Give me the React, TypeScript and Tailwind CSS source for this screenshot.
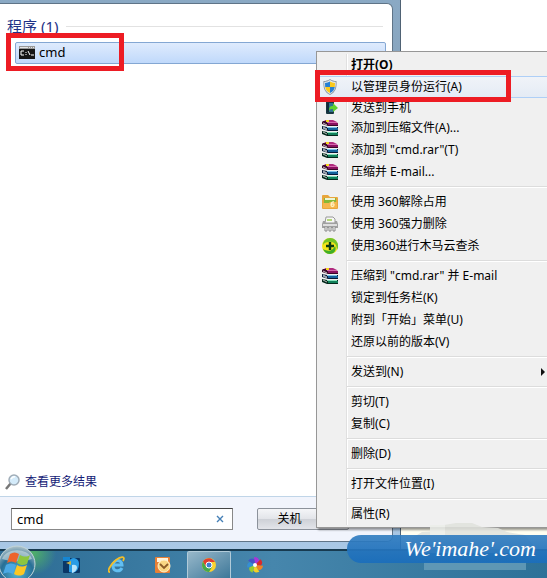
import type { ReactNode } from "react";

function WinRar() {
  return (
    <svg width="16" height="16" viewBox="0 0 16 16">
      <path d="M1 1h9l6 2v3H6L0 4V2z" fill="#3a0828" />
      <path d="M2 0h9l4 2H5z" fill="#b02a7e" />
      <path d="M5 2h10v1H5z" fill="#d768ae" />
      <path d="M6 3h10v2H6z" fill="#8a1260" />
      <path d="M0 6l5 1h11v4H6L0 9z" fill="#071a38" />
      <path d="M5 7h10v1H5z" fill="#7cc4ea" />
      <path d="M6 8h10v2H6z" fill="#14609a" />
      <path d="M0 11l5 1h11v4H5l-5-2z" fill="#04281c" />
      <path d="M5 12h10v1H5z" fill="#86e0bb" />
      <path d="M6 13h10v2H6z" fill="#11805a" />
      <path d="M1 3l4 2M1 7l4 2M1 8l4 2M1 12l4 2" fill="none" stroke="#e8e8e8" strokeWidth=".8" />
      <path d="M4 0h3v2H4z" fill="#f4d81f" />
    </svg>
  );
}

function Shield() {
  return (
    <svg width="16" height="16" viewBox="0 0 16 16">
      <path d="M8 0c2 1.500 4 2 6.500 2C15 8 14 13 8 16 2 13 1 8 1.500 2 4 2 6 1.500 8 0z" fill="#8b959e" />
      <path d="M8 1c2 1.300 3.500 1.800 5.700 2C14 8 13 12.500 8 15 3 12.500 2 8 2.300 3 4.500 2.800 6 2.300 8 1z" fill="#e4eaed" />
      <path d="M8 2.500V8H3.200L3 4c2-.2 3.500-.6 5-1.500zM8 8h4.800c-.5 3-2 4.800-4.800 6z" fill="#2780d4" />
      <path d="M8 2.500V8h4.800l.2-4c-2-.2-3.500-.6-5-1.500zM8 8H3.200c.5 3 2 4.800 4.800 6z" fill="#fbc91b" />
    </svg>
  );
}

function Phone() {
  return (
    <svg width="16" height="16" viewBox="0 0 16 16">
      <rect x="4" y="1" width="8" height="13" rx="1" fill="#183640" />
      <path d="M5 3h6v9H5z" fill="#2f7390" />
      <path d="M5 3h2v9H5z" fill="#102c3b" />
      <path d="M7 11c0-4 1-5 4-5V3l5 5-5 4V9c-2 0-3 0-4 2z" fill="#5fcf2e" />
    </svg>
  );
}

function Folder() {
  return (
    <svg width="16" height="16" viewBox="0 0 16 16">
      <path d="M0 2q0-1 1-1h5l2 2h7q1 0 1 1v10q0 1-1 1H1q-1 0-1-1z" fill="#e8a63c" />
      <path d="M2 4h12v5H2z" fill="#86b936" />
      <path d="M3 4h10v2H3z" fill="#ecf6d6" />
      <path d="M1 9h6l1-1h7v6H1z" fill="#f5b64e" />
      <path d="M12 8c-2-.5-3 1-3 3s3 2 3 0-2-1-3 0" fill="none" stroke="#fff2c4" strokeWidth="1.300" />
    </svg>
  );
}

function Shredder() {
  return (
    <svg width="16" height="16" viewBox="0 0 16 16">
      <path d="M4 1h7l2 2v4H3z" fill="#f7f7f7" stroke="#999" />
      <path d="M5 3h5v2H5z" fill="#b5d67b" />
      <path d="M1 5h2v2h10V5h2l1 3v4H0V8z" fill="#a0a0a0" />
      <path d="M1 8h14v2H1z" fill="#dedede" />
      <path d="M3 11v4h2v-4m2 0v4h2v-4m2 0v4h2v-4" fill="#fff" stroke="#888" />
    </svg>
  );
}

function Safe360() {
  return (
    <svg width="16" height="16" viewBox="0 0 16 16">
      <circle cx="8" cy="8" r="8" fill="#f3e51b" />
      <path d="M8 0a8 8 0 0 1 7 12c0-5-3-9-8-8-3 0-5 1-6 3 0-4 3-7 7-7z" fill="#4bb82c" opacity=".75" />
      <path d="M1 11c5 3 10 2 12-3 2 4-1 8-5 8-3 0-6-2-7-5z" fill="#3fae28" />
      <path d="M8 4v8M4 8h8" stroke="#0c3d14" strokeWidth="2.400" />
    </svg>
  );
}

function Terminal() {
  return (
    <svg width="16" height="13" viewBox="0 0 16 13">
      <path d="M0 0h16v13H0z" fill="#151515" />
      <path d="M0 0h16v3H0z" fill="#999" />
      <path d="M1 1h8v1H1zM10 1h1v1h-1zm2 0h1v1h-1zm2 0h1v1h-1z" fill="#e5e5e5" />
      <path d="M5 5H2v4h3M7 6v1m0 1v1M9 5l2 4M12 9h3" fill="none" stroke="#fff" />
    </svg>
  );
}

type Entry = { label: string; icon?: ReactNode; kind?: "bold" | "hot" | "short" | "sub" };

const groups: Entry[][] = [
  [
    { label: "打开(O)", kind: "bold" },
    { label: "以管理员身份运行(A)", icon: <Shield />, kind: "hot" },
    { label: "发送到手机", icon: <Phone />, kind: "short" },
    { label: "添加到压缩文件(A)...", icon: <WinRar /> },
    { label: '添加到 "cmd.rar"(T)', icon: <WinRar /> },
    { label: "压缩并 E-mail...", icon: <WinRar /> },
  ],
  [
    { label: "使用 360解除占用", icon: <Folder /> },
    { label: "使用 360强力删除", icon: <Shredder /> },
    { label: "使用360进行木马云查杀", icon: <Safe360 /> },
  ],
  [
    { label: '压缩到 "cmd.rar" 并 E-mail', icon: <WinRar /> },
    { label: "锁定到任务栏(K)" },
    { label: "附到「开始」菜单(U)" },
    { label: "还原以前的版本(V)" },
  ],
  [{ label: "发送到(N)", kind: "sub" }],
  [{ label: "剪切(T)" }, { label: "复制(C)" }],
  [{ label: "删除(D)" }],
  [{ label: "打开文件位置(I)" }],
  [{ label: "属性(R)" }],
];

const kindClass = {
  bold: "h-[22px] font-bold",
  hot: "h-[22px] border-y border-[#aecff7] bg-linear-to-b from-[#f0f3f8] to-[#e4ebf5]",
  short: "h-[19px]",
  sub: "h-[22px]",
  plain: "h-[22px]",
};

function MenuRow({ label, icon, kind }: Entry) {
  return (
    <button role="menuitem" className={`flex w-full items-center text-left whitespace-nowrap ${kindClass[kind ?? "plain"]}`}>
      <span className="w-8 shrink-0 pl-[3px]">{icon}</span>
      <span className="flex-1">{label}</span>
      {kind === "sub" && (
        <svg width="5" height="8" viewBox="0 0 5 8" className="mr-px">
          <path d="M0 0l4 4-4 4z" fill="#111" />
        </svg>
      )}
    </button>
  );
}

function ContextMenu() {
  return (
    <div role="menu" className="absolute top-[51px] right-0 left-[316px] border border-r-0 border-[#979797] bg-[#f0f0f0] py-0.5 pl-0.5 shadow-[2px_2px_2px_#0006]">
      <div className="bg-[linear-gradient(90deg,transparent_27px,#e0e0e0_27px,#e0e0e0_28px,#fff_28px,#fff_29px,transparent_29px)]">
        {groups.map((group, i) => (
          <div key={i}>
            {i > 0 && (
              <div role="separator" className="ml-[28px] flex h-2 items-center">
                <div className="h-0.5 flex-1 border-t border-[#dcdcdc] bg-white" />
              </div>
            )}
            {group.map((entry) => (
              <MenuRow key={entry.label} {...entry} />
            ))}
          </div>
        ))}
      </div>
    </div>
  );
}

function StartMenu() {
  return (
    <section className="flex w-[401px] shrink-0 flex-col border-r border-[#4f6274] bg-linear-to-b from-[#8aa9c4] via-[#8298ad] to-[#a9c8e6] pt-[3px] pr-[7px] pb-[7px]">
      <div className="flex flex-1 flex-col overflow-hidden rounded-r-md border border-l-0 border-[#5f7487] bg-white">
        <div className="flex-1 pt-3">
          <h2 className="flex h-5 items-center gap-2 pr-[9px] pl-[7px] text-[15px] text-[#1e3287]">
            程序 (1)
            <span className="h-px flex-1 bg-[#e2e2e2]" />
          </h2>
          <button className="mt-1.5 ml-[15px] flex h-[22px] w-[371px] items-center gap-1 rounded-xs border border-[#84a7d3] bg-linear-to-b from-[#dfebfd] to-[#c0d9fb] pb-0.5 pl-[3px] text-[13px]">
            <Terminal />
            cmd
          </button>
        </div>
        <a href="#more" className="mb-1 flex h-5 items-center gap-1 pl-[5px] text-[12px] text-[#151c77]">
          <svg width="16" height="16" viewBox="0 0 16 16">
            <path d="M1 15l5-6" stroke="#777" strokeWidth="2.500" />
            <circle cx="9" cy="6" r="5" fill="#d4ebfa" stroke="#a0adb8" strokeWidth="1.500" />
            <path d="M6 5q2-3 4-2" fill="none" stroke="#fff" strokeWidth="1.500" />
          </svg>
          查看更多结果
        </a>
        <div className="flex h-[45px] items-start border-t border-[#c0d5e8] bg-[#f1f4fc] pt-[11px] pl-[11px]">
          <label className="flex h-[22px] w-[222px] items-center border border-[#888] border-t-[#444] bg-white pr-2 pl-[5px]">
            <input aria-label="搜索程序和文件" defaultValue="cmd" className="min-w-0 flex-1 text-[13px] outline-none" />
            <button aria-label="清除">
              <svg width="8" height="8" viewBox="0 0 8 8">
                <path d="M1 1l6 6M7 1L1 7" stroke="#457fb6" strokeWidth="1.400" />
              </svg>
            </button>
          </label>
          <button className="ml-6 h-[22px] w-[92px] rounded-xs border border-[#8c929b] bg-[linear-gradient(#f4f5f8,#e2e4e9_50%,#cdd0d6_50%,#e3e5ea)] pr-[27px] text-[12px]">
            关机
          </button>
        </div>
      </div>
    </section>
  );
}

function Taskbar() {
  return (
    <nav className="relative flex h-[29px] items-center border-t-2 border-[#173a50] bg-linear-to-r from-[#2c6c94] via-[#4686ac] to-[#2d7198] pl-[62px]">
      <div className="absolute inset-y-0 left-0 w-14 bg-[radial-gradient(circle_at_34px_2px,#4fae6a,transparent_22px)]" />
      <button aria-label="开始" className="absolute top-[-6px] left-[-2px]">
        <svg width="38" height="38" viewBox="0 0 38 38">
          <defs>
            <radialGradient id="orb" cx=".5" cy=".75" r=".75">
              <stop offset="0" stopColor="#53b6d8" />
              <stop offset=".6" stopColor="#276f96" />
              <stop offset="1" stopColor="#b4c5ca" />
            </radialGradient>
          </defs>
          <circle cx="19" cy="19" r="18" fill="url(#orb)" stroke="#c2d5d9" />
          <path d="M4 14C8 3 29 2 34 14q-14 5-30 0z" fill="#dce7e8" opacity=".55" />
          <path d="M12 9c3-2 6-2 9 0l-3 9c-3-2-6-2-9 0z" fill="#ed642b" />
          <path d="M22 10c4 2 7 2 10 0l-3 9c-4 2-7 1-10-1z" fill="#8dc63f" />
          <path d="M8 20c4-2 7-2 10 0l-3 9c-3-2-6-2-10 0z" fill="#4ba9e5" />
          <path d="M19 20c3 2 6 2 10 0l-3 9c-3 2-6 2-10 0z" fill="#fcc623" />
        </svg>
      </button>
      <button aria-label="文件" className="flex w-[18px] justify-center">
        <svg width="17" height="16" viewBox="0 0 17 16">
          <rect y="1" width="17" height="15" rx="1" fill="#0a3767" />
          <path d="M0 0h7v4H0z" fill="#1686d2" />
          <path d="M6 15V5q1-4 5-4 5 1 5 6 0 7-6 9z" fill="#299ce5" />
          <path d="M9 8q5-1 5 3-1 4-5 5z" fill="#b9e4fa" />
          <path d="M3 6l5-2v4z" fill="#c9b14a" />
        </svg>
      </button>
      <button aria-label="Internet Explorer" className="ml-7 flex w-[18px] justify-center">
        <svg width="18" height="18" viewBox="0 0 18 18">
          <path d="M14 12c-2 4-9 4-9-2 0-7 9-7 9-1H6" fill="none" stroke="#62bff2" strokeWidth="3" />
          <path d="M2 16c-4 0 1-8 6-12 5-4 10-4 7 1" fill="none" stroke="#f4be28" strokeWidth="1.800" />
        </svg>
      </button>
      <button aria-label="Outlook" className="ml-7 flex w-[18px] justify-center">
        <svg width="16" height="16" viewBox="0 0 16 16">
          <rect width="15" height="16" rx="1" fill="#e77f35" />
          <path d="M2 1h11v4H2z" fill="#fff3dc" />
          <circle cx="9" cy="9" r="6" fill="#f9d683" stroke="#fff1ca" />
          <path d="M5 7l4 4 4-4" fill="none" stroke="#8b5a26" strokeWidth="1.800" />
        </svg>
      </button>
      <button aria-label="Chrome" className="ml-[15px] flex h-full w-[44px] items-center justify-center rounded-t-xs border border-b-0 border-[#b1cbd9] bg-linear-to-br from-[#97b8ca] to-[#3d7899]">
        <svg width="14" height="14" viewBox="0 0 14 14">
          <circle cx="7" cy="7" r="7" fill="#fbd22e" />
          <path d="M1 3.500A7 7 0 0 1 13 4H7L4 9z" fill="#df3e31" />
          <path d="M1 3.500A7 7 0 0 0 7 14l3-5H4z" fill="#45a94c" />
          <circle cx="7" cy="7" r="3" fill="#3f7ed1" stroke="#fff" strokeWidth="1" />
        </svg>
      </button>
      <button aria-label="相册" className="ml-[15px] flex w-[18px] justify-center">
        <svg width="16" height="16" viewBox="0 0 16 16">
          {["#a934d8", "#d9292c", "#f38423", "#f5cf26", "#97cc31", "#358fd4", "#4254c8"].map((color, i) => (
            <path key={color} d="M8 8L7 0q5 0 5 4z" fill={color} transform={`rotate(${i * 51.4} 8 8)`} />
          ))}
          <circle cx="8" cy="8" r="2" fill="#fff" />
        </svg>
      </button>
    </nav>
  );
}

function Watermark() {
  return (
    <>
      <svg className="absolute right-[9px] bottom-2 opacity-85" width="126" height="48" viewBox="0 0 126 48">
        <path d="M0 16l10-6 16-1 6-6 12-2h16l10 4 16 1 9 4 18 3 8 10-8 8H8L0 27z" fill="#e0e2dd" />
        <path d="M18 3h15v10H18z" fill="#eceeea" />
        <path d="M12 40h102v8H12z" fill="#669db9" />
      </svg>
      <p className="absolute right-0 bottom-[15px] left-[347px] flex h-7 items-center justify-end rounded-l-full bg-linear-to-b from-[#2f7cc0]/90 to-[#1b6ebb]/95 pr-[11px] font-['Liberation_Serif',serif] text-[22px] text-white italic">
        We&apos;imahe&apos;.com
      </p>
    </>
  );
}

export default function App() {
  return (
    <main className="relative flex min-h-screen flex-col overflow-hidden bg-white font-['Noto_Sans','Noto_Sans_CJK_SC',sans-serif] text-[12px] leading-4 text-black">
      <div className="flex flex-1">
        <StartMenu />
        <div className="mt-[527px] flex-1 bg-[#fffef0]" />
      </div>
      <Taskbar />
      <ContextMenu />
      <Watermark />
      <div className="absolute top-[33px] left-[6px] h-[38px] w-[118px] border-5 border-[#ed1c24]" />
      <div className="absolute top-[70px] left-[315px] h-8 w-[196px] border-5 border-[#ed1c24]" />
    </main>
  );
}
